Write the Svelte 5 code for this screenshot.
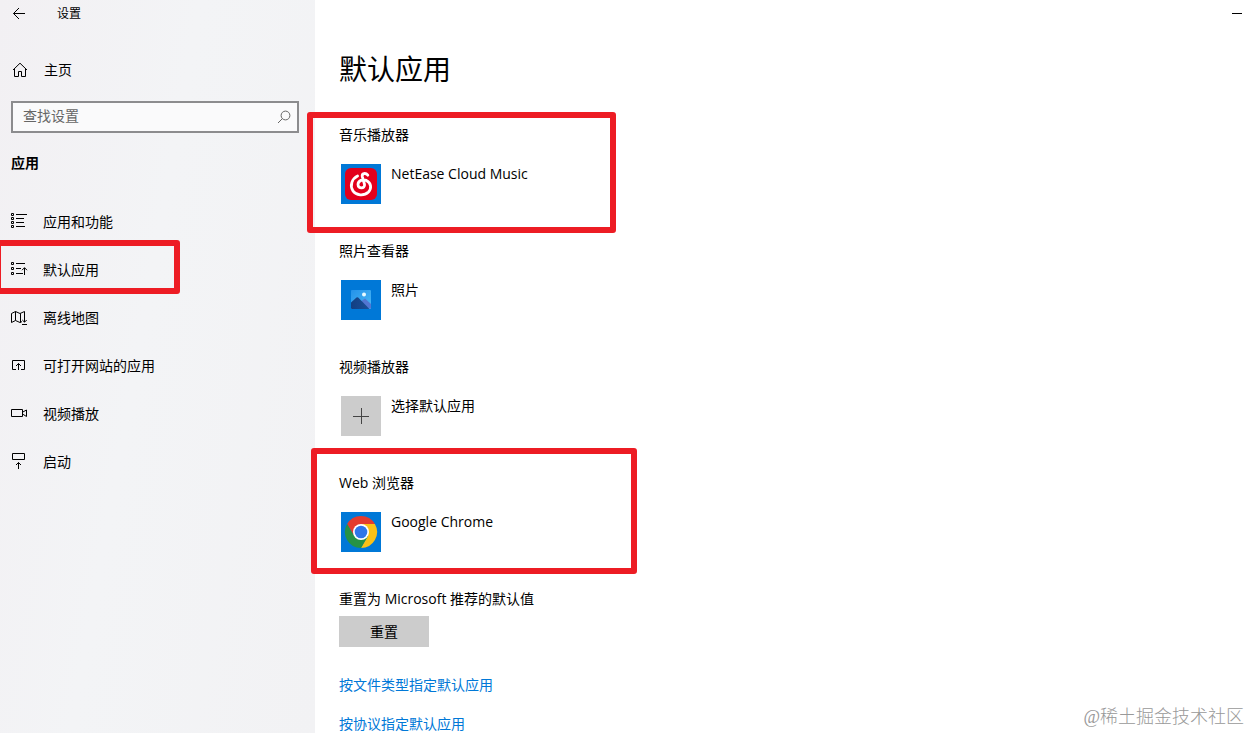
<script lang="ts">
    type Group = { title: string; app: string; icon: string; mark?: string };

    let query = $state('');

    const navItems = [
        { label: '应用和功能', icon: 'features' },
        { label: '默认应用', icon: 'defaults' },
        { label: '离线地图', icon: 'maps' },
        { label: '可打开网站的应用', icon: 'websites' },
        { label: '视频播放', icon: 'video' },
        { label: '启动', icon: 'startup' }
    ];

    const groups: Group[] = [
        { title: '音乐播放器', app: 'NetEase Cloud Music', icon: 'netease', mark: 'mark-music' },
        { title: '照片查看器', app: '照片', icon: 'photos' },
        { title: '视频播放器', app: '选择默认应用', icon: 'add' },
        { title: 'Web 浏览器', app: 'Google Chrome', icon: 'chrome', mark: 'mark-web' }
    ];

    let selected = $state('defaults');
</script>

<div class="settings">
    <aside>
        <header class="titlebar">
            <button class="back" aria-label="返回">
                <svg width="14" height="14" viewBox="0 0 14 14">
                    <path d="M13 6.5H1.5M7 1L1.5 6.5L7 12" />
                </svg>
            </button>
            <span>设置</span>
        </header>

        <a class="home" href="#home">
            <svg width="16" height="16" viewBox="0 0 16 16">
                <path d="M1 8L8 1.2L15 8M2.5 6.8V14.5H6.5V9.5H9.5V14.5H13.5V6.8" />
            </svg>
            主页
        </a>

        <label class="search">
            <input type="text" placeholder="查找设置" aria-label="查找设置" bind:value={query} />
            <svg width="14" height="14" viewBox="0 0 14 14">
                <circle cx="8.5" cy="5.5" r="4.4" />
                <path d="M5.4 8.6L1 13" />
            </svg>
        </label>

        <h2>应用</h2>

        <nav>
            {#each navItems as item}
                <a href="#{item.icon}" class="nav-item" onclick={() => (selected = item.icon)} aria-current={selected === item.icon ? 'page' : undefined}>
                    <svg width="18" height="18" viewBox="0 0 18 18">
                        {#if item.icon === 'features'}
                            <path d="M1.5 .5h2v2h-2zM1.5 4.5h2v2h-2zM1.5 8.5h2v2h-2zM1.5 12.5h2v2h-2zM6 1.5h11M6 5.5h8M6 9.5h8M6 13.5h9" />
                        {:else if item.icon === 'defaults'}
                            <path d="M1.5 1.5h2v2h-2zM1.5 6.5h2v2h-2zM1.5 11.5h2v2h-2zM6 2.5h9M6 7.5h5M6 12.5h7M14.5 14V6.8M12 9.2L14.5 6.7L17 9.2" />
                        {:else if item.icon === 'maps'}
                            <path d="M1.5 4.5L5.5 2.5L10 4.5L14.5 2.5V13M1.5 4.5V13.5L5.5 11.5L10 13.5L12 12.6M5.5 2.5V11.5M10.5 4.5V13.5M12.3 11L14.5 13.2L16.7 11M12 15.5H17" />
                        {:else if item.icon === 'websites'}
                            <path d="M6 12.5H2.5V3.5H14.5V12.5H11M8.5 13V6.5M6 9L8.5 6.5L11 9" />
                        {:else if item.icon === 'video'}
                            <path d="M1.5 4.5h11v7h-11zM12.5 7.2L16.5 5V11.5L12.5 9" />
                        {:else}
                            <path d="M2.5 .5h12v6h-12zM8.5 16V9.5M6 12L8.5 9.5L11 12" />
                        {/if}
                    </svg>
                    {item.label}
                    {#if item.icon === 'defaults'}
                        <span class="mark mark-nav"></span>
                    {/if}
                </a>
            {/each}
        </nav>
    </aside>

    <main>
        <button class="minimize" aria-label="最小化">
            <svg width="10" height="10" viewBox="0 0 10 10">
                <path d="M0 5.5H10" />
            </svg>
        </button>

        <h1>默认应用</h1>

        {#each groups as group}
            <section>
                <h3>{group.title}</h3>
                <button class="app">
                    <svg class="tile" class:empty={group.icon === 'add'} width="40" height="40" viewBox="0 0 40 40">
                        {#if group.icon === 'netease'}
                            <rect x="4" y="4" width="32" height="32" rx="6" fill="#e2001c" />
                            <path
                                d="M26.8 11.2C24.6 8.4 20.6 9.2 21.3 12.6L23.5 20.4C24.3 25 17 25.2 17 20.6C17 16.4 22 14.9 25.4 16.4C30.6 19 30.6 24.8 27.5 28C23 32.4 15 31.5 12 27C8.5 21.5 11 14.6 16.6 12"
                                fill="none" stroke="#fff" stroke-width="2.8" stroke-linecap="round"
                            />
                        {:else if group.icon === 'photos'}
                            <defs>
                                <linearGradient id="sky" x1="0" y1="0" x2="1" y2="1">
                                    <stop offset="0" stop-color="#2492ea" />
                                    <stop offset="1" stop-color="#4bb9f5" />
                                </linearGradient>
                                <linearGradient id="hill" x1="0" y1="0" x2="1" y2="0">
                                    <stop offset="0" stop-color="#123f82" />
                                    <stop offset="1" stop-color="#1b4f98" />
                                </linearGradient>
                            </defs>
                            <rect x="10" y="10" width="20" height="19" rx="1" fill="url(#sky)" />
                            <path d="M19 22L24 18.5L30 24V28.5H19z" fill="#5276d2" />
                            <path d="M10 22.5L15.5 17.5Q16.3 16.8 17.2 17.5L28.5 29H11Q10 29 10 28z" fill="url(#hill)" />
                            <circle cx="23" cy="14.5" r="2" fill="#e9fbff" />
                        {:else if group.icon === 'chrome'}
                            <path d="M6.1 12A16 16 0 0 1 33.9 12H20L13.1 24z" fill="#e33b2e" />
                            <path d="M20 12H33.9A16 16 0 0 1 20 36L26.9 24z" fill="#fbc116" />
                            <path d="M20 36A16 16 0 0 1 6.1 12L13.1 24H26.9z" fill="#269245" />
                            <circle cx="20" cy="20" r="8" fill="#fff" />
                            <circle cx="20" cy="20" r="6.3" fill="#2f76e8" />
                        {:else}
                            <path d="M12 20.5H28M20.5 12V28" stroke="#444" fill="none" />
                        {/if}
                    </svg>
                    <span>{group.app}</span>
                </button>
                {#if group.mark}
                    <span class="mark {group.mark}"></span>
                {/if}
            </section>
        {/each}

        <h3>重置为 Microsoft 推荐的默认值</h3>
        <button class="reset">重置</button>

        <div class="links">
            <a href="#file-type">按文件类型指定默认应用</a>
            <a href="#protocol">按协议指定默认应用</a>
        </div>
    </main>

    <div class="watermark">@稀土掘金技术社区</div>
</div>

<style>
    :global(body) {
        margin: 0;
    }

    .settings {
        position: relative;
        display: flex;
        height: 100vh;
        overflow: hidden;
        background: #fff;
        color: #000;
        font-family: 'Open Sans', 'Noto Sans CJK SC', sans-serif;
        font-size: 14px;
        line-height: 20px;
    }

    svg {
        flex: none;
        fill: none;
        stroke: #000;
    }

    button {
        padding: 0;
        border: none;
        background: none;
        color: inherit;
        font: inherit;
    }

    a {
        color: inherit;
        text-decoration: none;
    }

    h1,
    h2,
    h3 {
        margin: 0;
        font-size: 14px;
        font-weight: 400;
    }

    aside {
        flex: 0 0 315px;
        box-sizing: border-box;
        background: linear-gradient(100deg, #f2f0f3, #f3f4f6 45%, #f2f2f4);
    }

    .titlebar {
        display: flex;
        align-items: center;
        gap: 31px;
        height: 28px;
        padding-left: 12px;
        font-size: 12px;
    }

    .back {
        display: flex;
    }

    .home {
        display: flex;
        align-items: center;
        gap: 16px;
        height: 20px;
        margin: 32px 0 21px;
        padding-left: 12px;
    }

    .search {
        display: flex;
        align-items: center;
        box-sizing: border-box;
        height: 32px;
        margin: 0 16px 0 11px;
        padding: 0 6px 0 10px;
        border: 2px solid #8c8c8e;
        background: #fafafb;
    }

    .search input {
        flex: 1;
        min-width: 0;
        height: 20px;
        padding: 0 0 2px;
        border: none;
        outline: none;
        background: transparent;
        font: inherit;
    }

    .search input::placeholder {
        color: #666;
        opacity: 1;
    }

    .search svg {
        stroke: #666;
    }

    h2 {
        margin: 20px 0 25px 11px;
        font-weight: 700;
    }

    .nav-item {
        position: relative;
        display: flex;
        align-items: center;
        gap: 15px;
        height: 48px;
        padding-left: 10px;
    }

    main {
        position: relative;
        flex: 1;
        padding: 49px 24px 0;
    }

    .minimize {
        position: absolute;
        top: 8px;
        right: 8px;
        display: flex;
    }

    h1 {
        margin-bottom: 36px;
        font-size: 28px;
        line-height: 40px;
    }

    section {
        position: relative;
        height: 116px;
    }

    .app {
        display: flex;
        gap: 10px;
        margin-top: 19px;
        padding-left: 2px;
        text-align: left;
    }

    .tile {
        background: #0078d7;
        stroke: none;
    }

    .tile.empty {
        background: #ccc;
    }

    .reset {
        width: 90px;
        height: 31px;
        margin-top: 7px;
        background: #ccc;
    }

    .links {
        display: flex;
        flex-direction: column;
        align-items: flex-start;
        gap: 19px;
        margin-top: 28px;
        color: #0078d7;
    }

    .mark {
        position: absolute;
        box-sizing: border-box;
        border: 6px solid #ed1c24;
        border-radius: 3px;
        pointer-events: none;
    }

    .mark-nav {
        top: -6px;
        left: -5px;
        width: 185px;
        height: 54px;
    }

    .mark-music {
        top: -13px;
        left: -32px;
        width: 309px;
        height: 121px;
    }

    .mark-web {
        top: -25px;
        left: -28px;
        width: 326px;
        height: 126px;
    }

    .watermark {
        position: absolute;
        right: 6px;
        bottom: 4px;
        color: #999;
        font-family: 'Liberation Serif', 'Noto Sans CJK SC', serif;
        font-size: 18px;
        font-weight: 300;
        line-height: 24px;
    }
</style>
